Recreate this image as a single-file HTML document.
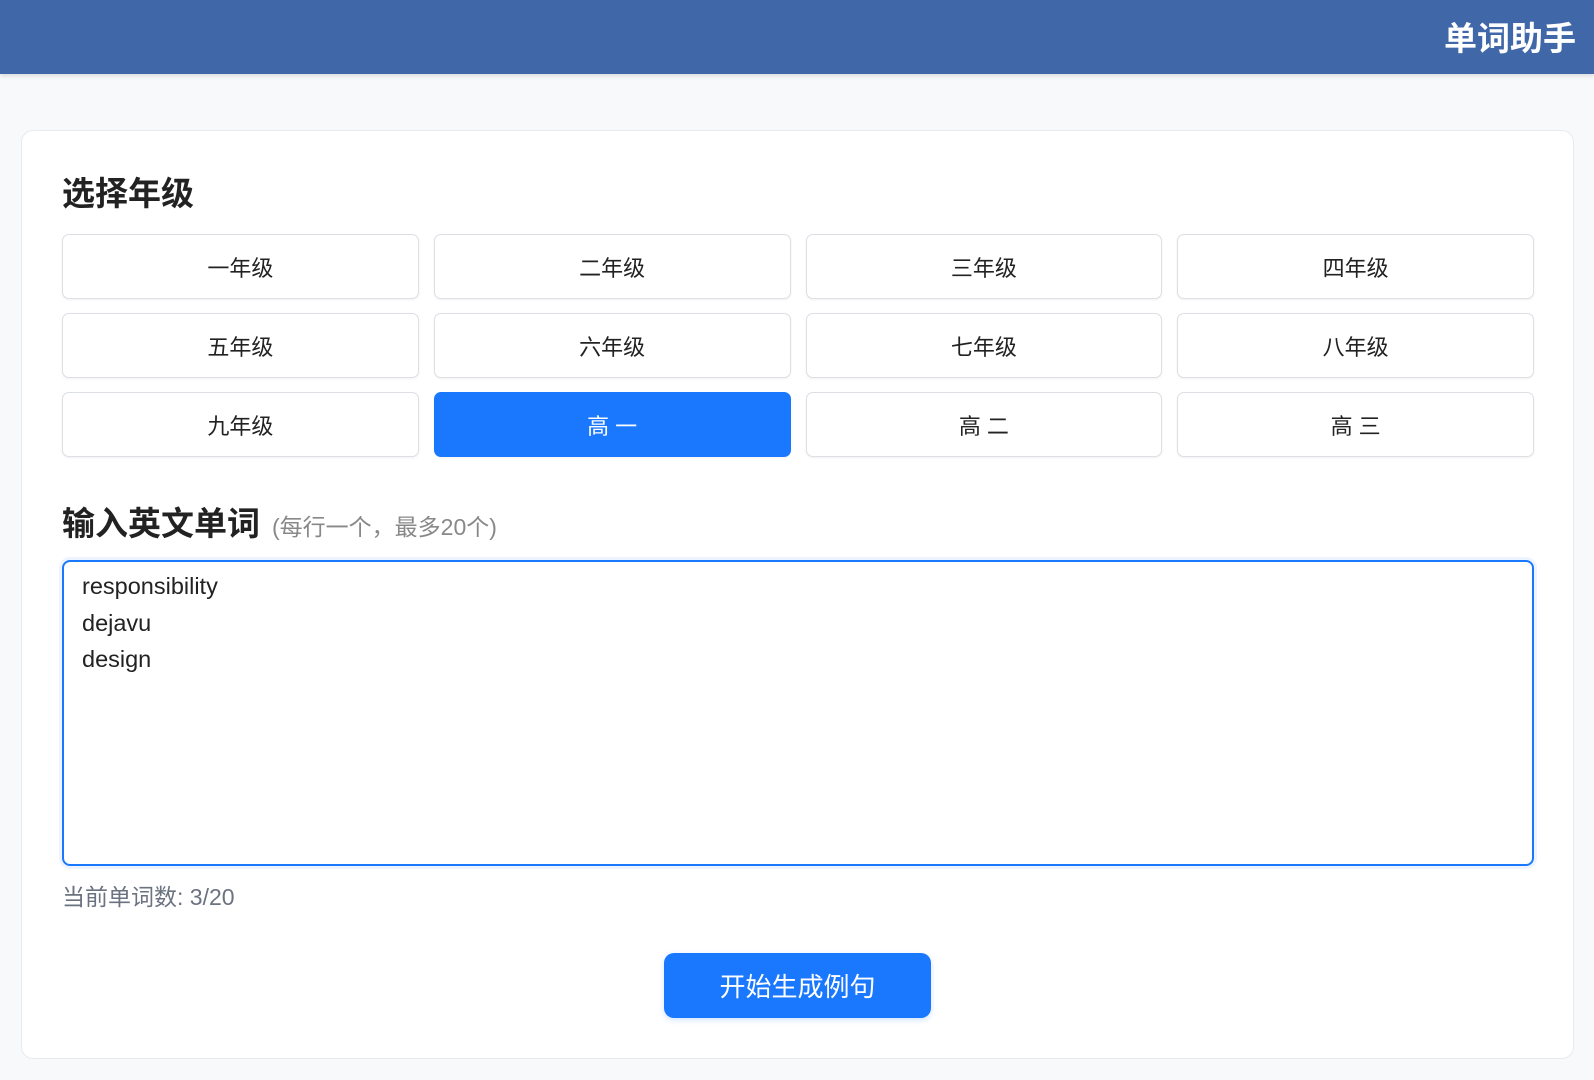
<!DOCTYPE html>
<html><head><meta charset="utf-8"><style>
*{box-sizing:border-box;margin:0;padding:0}
body{width:1594px;height:1080px;background:#f8f9fb;font-family:"Liberation Sans","Noto Sans CJK SC",sans-serif;position:relative;overflow:hidden}
.hdr{position:absolute;left:0;top:0;width:1594px;height:74px;background:#4067a8;box-shadow:0 2px 4px rgba(0,0,0,.12)}
.hdr span{position:absolute;right:18px;top:12px;color:#fff;font-size:33px;font-weight:bold}
.card{position:absolute;left:21px;top:130px;width:1553px;height:929px;background:#fff;border:1px solid #e8eaee;border-radius:12px}
h2{position:absolute;left:62px;font-size:33px;font-weight:bold;color:#222}
h2 small{font-size:23px;font-weight:normal;color:#888;margin-left:12px}
.grid{position:absolute;left:62px;top:234px;width:1472px;display:grid;grid-template-columns:repeat(4,1fr);column-gap:15px;row-gap:14px}
.b{height:65px;border:1.5px solid #dcdfe4;border-radius:7px;background:#fff;display:flex;align-items:center;justify-content:center;font-size:22px;color:#222;box-shadow:0 1px 2px rgba(0,0,0,.06)}
.b.on{background:#1a78ff;border-color:#1a78ff;color:#fff}
.ta{position:absolute;left:62px;top:560px;width:1472px;height:306px;border:2px solid #1a78ff;border-radius:8px;padding:6px 18px;font-size:23.5px;line-height:36.5px;color:#222;box-shadow:0 0 0 3px rgba(26,120,255,.08)}
.cnt{position:absolute;left:62px;top:878px;font-size:23px;color:#6b7280}
.go{position:absolute;left:664px;top:953px;width:267px;height:65px;background:#1a78ff;border-radius:10px;color:#fff;font-size:26px;display:flex;align-items:center;justify-content:center;box-shadow:0 2px 6px rgba(26,120,255,.2)}
</style></head><body>
<div class="hdr"><span>单词助手</span></div>
<div class="card"></div>
<h2 style="top:167px">选择年级</h2>
<div class="grid">
<div class="b">一年级</div><div class="b">二年级</div><div class="b">三年级</div><div class="b">四年级</div>
<div class="b">五年级</div><div class="b">六年级</div><div class="b">七年级</div><div class="b">八年级</div>
<div class="b">九年级</div><div class="b on">高 一</div><div class="b">高 二</div><div class="b">高 三</div>
</div>
<h2 style="top:497px">输入英文单词<small>(每行一个，最多20个)</small></h2>
<div class="ta">responsibility<br>dejavu<br>design</div>
<div class="cnt">当前单词数: 3/20</div>
<div class="go">开始生成例句</div>
</body></html>
